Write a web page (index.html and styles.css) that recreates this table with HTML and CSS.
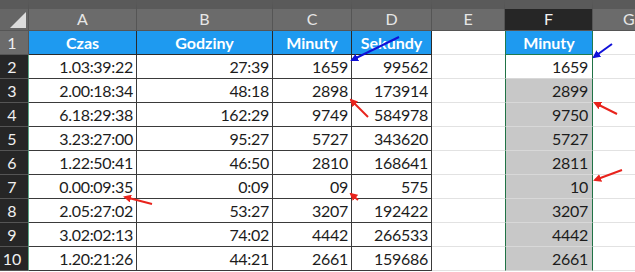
FILE: index.html
```html
<!DOCTYPE html>
<html>
<head>
<meta charset="utf-8">
<link rel="stylesheet" href="styles.css">
</head>
<body>
<div class="sheet">
  <div class="grid">
    <div class="corner"><span class="tri"></span></div>
    <div class="colh">A</div>
    <div class="colh">B</div>
    <div class="colh">C</div>
    <div class="colh">D</div>
    <div class="colh">E</div>
    <div class="colh colh-sel">F</div>
    <div class="colh colh-last">G</div>

    <div class="rowh rowh-1">1</div>
    <div class="c hd">Czas</div>
    <div class="c hd">Godziny</div>
    <div class="c hd">Minuty</div>
    <div class="c hd hd-end">Sekundy</div>
    <div class="c e"></div>
    <div class="c fhd">Minuty</div>
    <div class="c g"></div>

    <div class="rowh">2</div>
    <div class="c n">1.03:39:22</div><div class="c n">27:39</div><div class="c n">1659</div><div class="c n end">99562</div><div class="c e"></div><div class="c f fw">1659</div><div class="c g"></div>

    <div class="rowh">3</div>
    <div class="c n">2.00:18:34</div><div class="c n">48:18</div><div class="c n">2898</div><div class="c n end">173914</div><div class="c e"></div><div class="c f">2899</div><div class="c g"></div>

    <div class="rowh">4</div>
    <div class="c n">6.18:29:38</div><div class="c n">162:29</div><div class="c n">9749</div><div class="c n end">584978</div><div class="c e"></div><div class="c f">9750</div><div class="c g"></div>

    <div class="rowh">5</div>
    <div class="c n">3.23:27:00</div><div class="c n">95:27</div><div class="c n">5727</div><div class="c n end">343620</div><div class="c e"></div><div class="c f">5727</div><div class="c g"></div>

    <div class="rowh">6</div>
    <div class="c n">1.22:50:41</div><div class="c n">46:50</div><div class="c n">2810</div><div class="c n end">168641</div><div class="c e"></div><div class="c f">2811</div><div class="c g"></div>

    <div class="rowh">7</div>
    <div class="c n">0.00:09:35</div><div class="c n">0:09</div><div class="c n">09</div><div class="c n end">575</div><div class="c e"></div><div class="c f">10</div><div class="c g"></div>

    <div class="rowh">8</div>
    <div class="c n">2.05:27:02</div><div class="c n">53:27</div><div class="c n">3207</div><div class="c n end">192422</div><div class="c e"></div><div class="c f">3207</div><div class="c g"></div>

    <div class="rowh">9</div>
    <div class="c n">3.02:02:13</div><div class="c n">74:02</div><div class="c n">4442</div><div class="c n end">266533</div><div class="c e"></div><div class="c f">4442</div><div class="c g"></div>

    <div class="rowh">10</div>
    <div class="c n">1.20:21:26</div><div class="c n">44:21</div><div class="c n">2661</div><div class="c n end">159686</div><div class="c e"></div><div class="c f">2661</div><div class="c g"></div>
  </div>

  <svg class="arrows" width="635" height="272" viewBox="0 0 635 272">
    <defs>
      <marker id="hb" markerWidth="8" markerHeight="8" refX="6" refY="4" orient="auto" markerUnits="userSpaceOnUse">
        <path d="M0,0 L8,4 L0,8 Z" fill="#1010d8"/>
      </marker>
      <marker id="hr" markerWidth="8" markerHeight="8" refX="6" refY="4" orient="auto" markerUnits="userSpaceOnUse">
        <path d="M0,0 L8,4 L0,8 Z" fill="#e8231c"/>
      </marker>
    </defs>
    <line x1="399" y1="37" x2="352" y2="60" stroke="#1010d8" stroke-width="2" marker-end="url(#hb)"/>
    <line x1="612" y1="44" x2="594" y2="57" stroke="#1010d8" stroke-width="2" marker-end="url(#hb)"/>
    <line x1="368" y1="117" x2="351" y2="100" stroke="#e8231c" stroke-width="2" marker-end="url(#hr)"/>
    <line x1="617" y1="114" x2="595" y2="103" stroke="#e8231c" stroke-width="2" marker-end="url(#hr)"/>
    <line x1="622" y1="170" x2="595" y2="180" stroke="#e8231c" stroke-width="2" marker-end="url(#hr)"/>
    <line x1="152" y1="204" x2="125" y2="197" stroke="#e8231c" stroke-width="2" marker-end="url(#hr)"/>
    <line x1="358" y1="200" x2="351" y2="194" stroke="#e8231c" stroke-width="2" marker-end="url(#hr)"/>
  </svg>
</div>
</body>
</html>
```
FILE: styles.css
```css
html, body {
  margin: 0;
  padding: 0;
  background: #ffffff;
}

.sheet {
  position: relative;
  width: 635px;
  height: 272px;
  overflow: hidden;
  font-family: Lato, "Open Sans", sans-serif;
}

.grid {
  display: grid;
  grid-template-columns: 29px 108px 136px 79px 80px 73px 88px 42px;
  grid-template-rows: 31px repeat(10, 24px);
}

.corner {
  background: #666666;
  border-top: 9px solid #5a5a5a;
  border-right: 1px solid #555;
  border-bottom: 1px solid #555;
  position: relative;
}

.tri {
  position: absolute;
  right: 2px;
  bottom: 2px;
  width: 0;
  height: 0;
  border-left: 16px solid transparent;
  border-bottom: 16px solid #dcdcdc;
}

.colh {
  background: #6b6b6b;
  border-top: 9px solid #5a5a5a;
  border-right: 1px solid #555;
  border-bottom: 1px solid #555;
  color: #e6e6e6;
  font-size: 16px;
  line-height: 20px;
  text-align: center;
}

.colh-sel {
  background: #262626;
  color: #f2f2f2;
}

.colh-last {
  border-right: none;
  text-align: left;
  padding-left: 30px;
}

.rowh {
  background: #262626;
  color: #f0f0f0;
  font-size: 16px;
  line-height: 23px;
  text-align: center;
  border-bottom: 1px solid #555;
  border-right: 1px solid #5aa889;
  padding-right: 4px;
}

.rowh-1 {
  background: #6b6b6b;
  border-right: 1px solid #555;
}

.c {
  box-sizing: border-box;
  font-size: 16px;
  line-height: 23px;
  color: #1c1c1c;
  white-space: nowrap;
}

.hd {
  background: #1e9af0;
  color: #ffffff;
  font-weight: bold;
  text-align: center;
  border-right: 1px solid #2a2a2a;
  border-bottom: 1px solid #2a2a2a;
}

.n {
  text-align: right;
  padding-right: 3px;
  border-right: 1px solid #3a3a3a;
  border-bottom: 1px solid #3a3a3a;
  letter-spacing: -0.3px;
}

.e {
  border-bottom: 1px solid #e2e2e2;
}

.g {
  border-bottom: 1px solid #e2e2e2;
}

.fhd {
  background: #1e9af0;
  color: #ffffff;
  font-weight: bold;
  text-align: center;
  border-left: 1px solid #1f7a50;
  border-right: 1px solid #1f7a50;
  border-bottom: 1px solid #1f7a50;
}

.f {
  background: #c8c8c8;
  text-align: right;
  padding-right: 4px;
  border-left: 1px solid #217346;
  border-right: 1px solid #217346;
  border-bottom: 1px solid #d8d8d8;
  letter-spacing: -0.3px;
}

.fw {
  background: #ffffff;
}

.arrows {
  position: absolute;
  left: 0;
  top: 0;
  pointer-events: none;
}
```
